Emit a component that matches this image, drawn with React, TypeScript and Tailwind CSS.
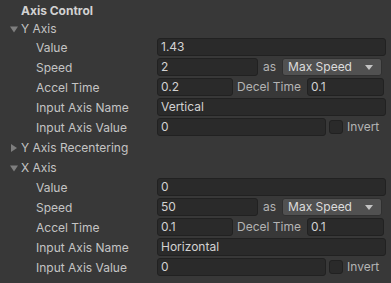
import React from "react";

const Field = ({ value, className = "" }: { value: string; className?: string }) => (
    <div
        className={`h-[18px] rounded-[3px] border border-[#212121] bg-[#2a2a2a] pl-[3px] text-[12px] leading-[16px] text-[#d2d2d2] ${className}`}
    >
        {value}
    </div>
);

const Arrow = ({ open }: { open: boolean }) => (
    <svg width="8" height="8" viewBox="0 0 8 8" className="mr-[3px] ml-[10px] shrink-0">
        {open ? <path d="M0 1.5 L8 1.5 L4 7.5 Z" fill="#7e7e7e" /> : <path d="M1 0 L7 4 L1 8 Z" fill="#7e7e7e" />}
    </svg>
);

const Row = ({ label, children }: { label: string; children: React.ReactNode }) => (
    <div className="flex h-[20px] items-start">
        <div className="w-[157px] shrink-0 pl-[36px] leading-[20px]">{label}</div>
        <div className="flex flex-1 items-center gap-[4px] pr-[5px]">{children}</div>
    </div>
);

const AxisBlock = ({ speed, accel, name }: { speed: string; accel: string; name: string }) => (
    <>
        <Row label="Value">
            <Field value={speed === "2" ? "1.43" : "0"} className="flex-1" />
        </Row>
        <Row label="Speed">
            <Field value={speed} className="w-[101px]" />
            <span className="ml-[1px] leading-[18px] text-[#b4b4b4]">as</span>
            <div className="ml-[2px] flex h-[18px] w-[100px] items-center justify-between rounded-[3px] border border-[#303030] bg-[#515151] pr-[8px] pl-[5px] text-[#dcdcdc]">
                <span>Max Speed</span>
                <svg width="8" height="5" viewBox="0 0 8 5">
                    <path d="M0 0 L8 0 L4 5 Z" fill="#c4c4c4" />
                </svg>
            </div>
        </Row>
        <Row label="Accel Time">
            <Field value={accel} className="w-[76px]" />
            <span className="leading-[18px] text-[#b4b4b4]">Decel Time</span>
            <Field value="0.1" className="ml-[2px] w-[77px]" />
        </Row>
        <Row label="Input Axis Name">
            <Field value={name} className="flex-1" />
        </Row>
        <Row label="Input Axis Value">
            <Field value="0" className="w-[169px]" />
            <div className="ml-[-1px] h-[14px] w-[14px] rounded-[3px] border border-[#212121] bg-[#2a2a2a]" />
            <span className="leading-[18px] text-[#b4b4b4]">Invert</span>
        </Row>
    </>
);

export default function App() {
    return (
        <div
            className="h-[283px] w-[391px] overflow-hidden bg-[#383838] pt-[2px] text-[12px] text-[#c4c4c4]"
            style={{ fontFamily: "Inter, 'Noto Sans', sans-serif" }}
        >
            <div className="h-[18px] pl-[21px] leading-[18px] font-bold text-[#d2d2d2]">Axis Control</div>
            <div className="flex h-[18px] items-center">
                <Arrow open />
                <span>Y Axis</span>
            </div>
            <AxisBlock speed="2" accel="0.2" name="Vertical" />
            <div className="flex h-[20px] items-center">
                <Arrow open={false} />
                <span>Y Axis Recentering</span>
            </div>
            <div className="flex h-[20px] items-center">
                <Arrow open />
                <span>X Axis</span>
            </div>
            <AxisBlock speed="50" accel="0.1" name="Horizontal" />
        </div>
    );
}
